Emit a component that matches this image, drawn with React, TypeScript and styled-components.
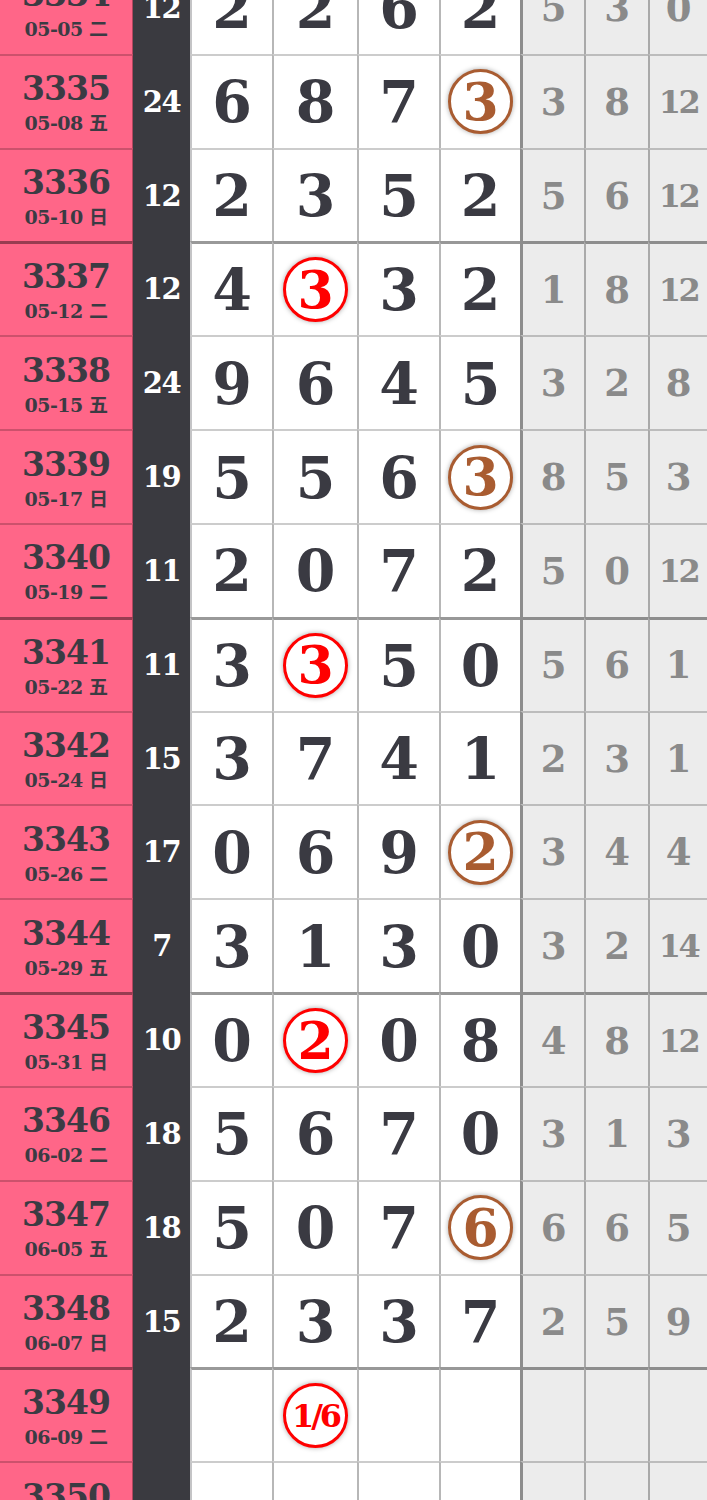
import React from "react";
import styled, { createGlobalStyle, css } from "styled-components";

type Mark = { v: string; tone: "red" | "brown" };
type Cell = string | Mark;

type Draw = {
  issue: string;
  date: string;
  sum: string;
  nums: Cell[];
  miss: string[];
};

const rows: Draw[] = [
  { issue: "3334", date: "05-05 二", sum: "12", nums: ["2", "2", "6", "2"], miss: ["5", "3", "0"] },
  { issue: "3335", date: "05-08 五", sum: "24", nums: ["6", "8", "7", { v: "3", tone: "brown" }], miss: ["3", "8", "12"] },
  { issue: "3336", date: "05-10 日", sum: "12", nums: ["2", "3", "5", "2"], miss: ["5", "6", "12"] },
  { issue: "3337", date: "05-12 二", sum: "12", nums: ["4", { v: "3", tone: "red" }, "3", "2"], miss: ["1", "8", "12"] },
  { issue: "3338", date: "05-15 五", sum: "24", nums: ["9", "6", "4", "5"], miss: ["3", "2", "8"] },
  { issue: "3339", date: "05-17 日", sum: "19", nums: ["5", "5", "6", { v: "3", tone: "brown" }], miss: ["8", "5", "3"] },
  { issue: "3340", date: "05-19 二", sum: "11", nums: ["2", "0", "7", "2"], miss: ["5", "0", "12"] },
  { issue: "3341", date: "05-22 五", sum: "11", nums: ["3", { v: "3", tone: "red" }, "5", "0"], miss: ["5", "6", "1"] },
  { issue: "3342", date: "05-24 日", sum: "15", nums: ["3", "7", "4", "1"], miss: ["2", "3", "1"] },
  { issue: "3343", date: "05-26 二", sum: "17", nums: ["0", "6", "9", { v: "2", tone: "brown" }], miss: ["3", "4", "4"] },
  { issue: "3344", date: "05-29 五", sum: "7", nums: ["3", "1", "3", "0"], miss: ["3", "2", "14"] },
  { issue: "3345", date: "05-31 日", sum: "10", nums: ["0", { v: "2", tone: "red" }, "0", "8"], miss: ["4", "8", "12"] },
  { issue: "3346", date: "06-02 二", sum: "18", nums: ["5", "6", "7", "0"], miss: ["3", "1", "3"] },
  { issue: "3347", date: "06-05 五", sum: "18", nums: ["5", "0", "7", { v: "6", tone: "brown" }], miss: ["6", "6", "5"] },
  { issue: "3348", date: "06-07 日", sum: "15", nums: ["2", "3", "3", "7"], miss: ["2", "5", "9"] },
  { issue: "3349", date: "06-09 二", sum: "", nums: ["", { v: "1/6", tone: "red" }, "", ""], miss: ["", "", ""] },
  { issue: "3350", date: "06-12 五", sum: "", nums: ["", "", "", ""], miss: ["", "", ""] },
];

const App = () => {
  return (
    <>
      <GlobalStyle />
      <StyledBoard>
        <StyledSheet>
          {rows.map((r) => {
            const thick = (Number(r.issue) - 3333) % 4 === 0;
            return (
              <StyledRow key={r.issue}>
                <StyledIssue $thick={thick}>
                  <span className="issue--no">{r.issue}</span>
                  <span className="issue--date">{r.date}</span>
                </StyledIssue>
                <StyledSum>{r.sum}</StyledSum>
                {r.nums.map((n, i) => (
                  <StyledNum key={i} $thick={thick} $first={i === 0}>
                    {typeof n === "string" ? (
                      n
                    ) : (
                      <StyledRing $tone={n.tone} $small={n.v.length > 1}>
                        {n.v}
                      </StyledRing>
                    )}
                  </StyledNum>
                ))}
                {r.miss.map((m, i) => (
                  <StyledMiss key={i} $thick={thick} $first={i === 0} $wide={m.length > 1}>
                    {m}
                  </StyledMiss>
                ))}
              </StyledRow>
            );
          })}
        </StyledSheet>
      </StyledBoard>
    </>
  );
};

const GlobalStyle = createGlobalStyle`
  html, body {
    margin: 0;
    padding: 0;
    background: #ffffff;
  }
  body {
    font-family: "DejaVu Serif", "Noto Sans CJK SC", serif;
  }
`;

const StyledBoard = styled.div`
  width: 707px;
  height: 1500px;
  overflow: hidden;
`;

const StyledSheet = styled.div`
  margin-top: -40px;
  display: flex;
  flex-direction: column;
`;

const StyledRow = styled.div`
  display: grid;
  grid-template-columns: 133px 57px 82px 85px 82px 81px 64px 64px 1fr;
  height: 93.83px;
`;

const lineTop = css<{ $thick: boolean }>`
  border-top: ${(p) => (p.$thick ? "3px solid rgba(0, 0, 0, 0.4)" : "2px solid rgba(0, 0, 0, 0.2)")};
`;

const StyledIssue = styled.div<{ $thick: boolean }>`
  ${lineTop}
  box-sizing: border-box;
  background-color: #ff6688;
  border-right: 1px solid rgba(0, 0, 0, 0.3);
  color: #3b3b43;
  display: flex;
  flex-direction: column;
  align-items: center;
  justify-content: center;
  padding-top: 5px;
  font-weight: bold;

  .issue--no {
    font-size: 33px;
    line-height: 32px;
    letter-spacing: -1px;
  }
  .issue--date {
    margin-top: 6px;
    font-size: 19px;
    line-height: 24px;
    letter-spacing: -0.5px;
  }
`;

const StyledSum = styled.div`
  background-color: #3a3a40;
  color: #ffffff;
  font-weight: bold;
  font-size: 29px;
  letter-spacing: -1.5px;
  display: flex;
  align-items: center;
  justify-content: center;
  padding-top: 2px;
`;

const StyledNum = styled.div<{ $thick: boolean; $first: boolean }>`
  ${lineTop}
  box-sizing: border-box;
  background-color: #ffffff;
  border-left: ${(p) => (p.$first ? "2px solid #c4c4c6" : "2px solid rgba(0, 0, 0, 0.28)")};
  color: #3a3a42;
  font-weight: bold;
  font-size: 57px;
  display: flex;
  align-items: center;
  justify-content: center;
`;

const StyledMiss = styled.div<{ $thick: boolean; $first: boolean; $wide: boolean }>`
  ${lineTop}
  box-sizing: border-box;
  background-color: #ececec;
  border-left: ${(p) => (p.$first ? "3px solid rgba(0, 0, 0, 0.4)" : "2px solid rgba(0, 0, 0, 0.28)")};
  color: #8a8a8a;
  font-weight: bold;
  font-size: ${(p) => (p.$wide ? "32px" : "37px")};
  letter-spacing: ${(p) => (p.$wide ? "-2.5px" : "0")};
  display: flex;
  align-items: center;
  justify-content: center;
`;

const StyledRing = styled.span<{ $tone: "red" | "brown"; $small: boolean }>`
  box-sizing: border-box;
  width: 65px;
  height: 65px;
  border-radius: 50%;
  border: 3px solid ${(p) => (p.$tone === "red" ? "#ff0000" : "#a95c31")};
  color: ${(p) => (p.$tone === "red" ? "#ff0000" : "#a95c31")};
  background: #ffffff;
  box-shadow: 0 0 5px rgba(0, 0, 0, 0.35);
  display: flex;
  align-items: center;
  justify-content: center;
  font-size: ${(p) => (p.$small ? "32px" : "52px")};
  letter-spacing: ${(p) => (p.$small ? "-3px" : "0")};
  line-height: 1;
`;

export default App;
